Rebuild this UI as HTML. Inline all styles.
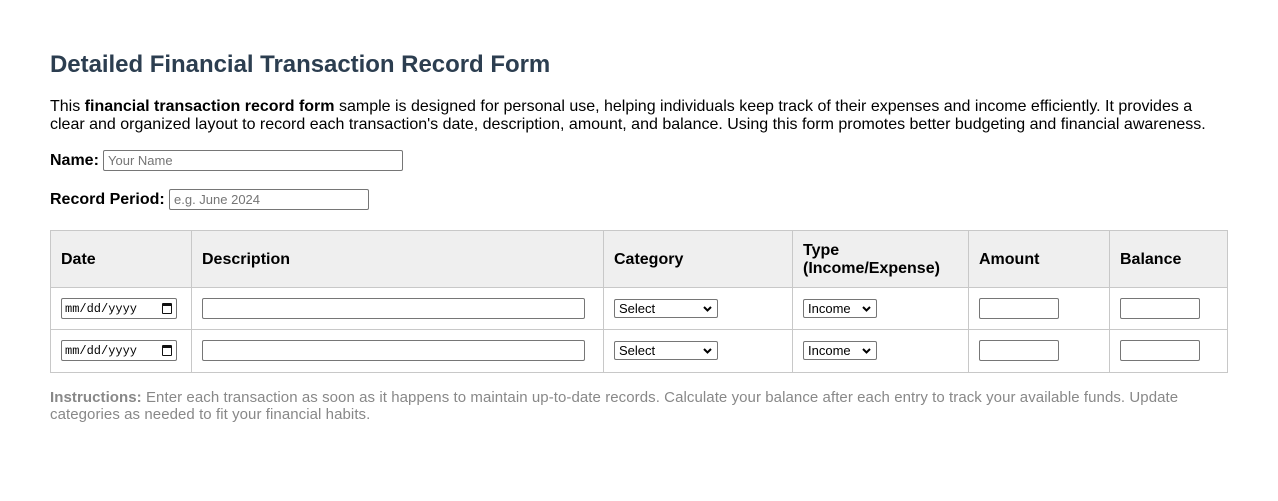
<!DOCTYPE html>
<html><head><style>
*{margin:0;padding:0;box-sizing:border-box}
body{width:1278px;height:501px;background:#fff;font-family:"Liberation Sans",Arial,sans-serif;color:#000;position:relative;overflow:hidden}
.a{position:absolute;white-space:nowrap}
h1{position:absolute;left:50px;top:51px;font-size:24px;color:#2c3e50;font-weight:bold;letter-spacing:-0.03px}
.p{position:absolute;left:50px;top:98px;font-size:16px;line-height:18px;width:1180px}
.lbl{font-size:16px;font-weight:bold}
.in{position:absolute;border:1px solid #767676;border-radius:2px;background:#fff;font-size:13px;color:#757575;padding-left:4px;line-height:19px}
.ln{position:absolute;background:#c8c8c8}
.th{position:absolute;font-size:16px;font-weight:bold;line-height:18px}
.sel{position:absolute;border:1px solid #767676;border-radius:2px;font-size:13px;padding-left:4px;line-height:17px;background:#fff}
.sel svg{position:absolute;right:5px;top:6px}
.date{position:absolute;border:1px solid #767676;border-radius:2px;font-family:"Liberation Mono",monospace;font-size:12px;padding-left:3px;line-height:20px}
.date i{position:absolute;right:4px;top:4px;width:10px;height:11px;border:1.5px solid #111;border-top-width:3px;border-radius:1px}
.ins{position:absolute;left:50px;top:389px;font-size:15px;line-height:17px;color:#888;width:1180px;letter-spacing:0.07px}
</style></head><body>
<h1>Detailed Financial Transaction Record Form</h1>
<div class="p">This <b>financial transaction record form</b> sample is designed for personal use, helping individuals keep track of their expenses and income efficiently. It provides a clear and organized layout to record each transaction's date, description, amount, and balance. Using this form promotes better budgeting and financial awareness.</div>
<div class="a lbl" style="left:50px;top:152px">Name:</div>
<div class="in" style="left:103px;top:150px;width:300px;height:21px">Your Name</div>
<div class="a lbl" style="left:50px;top:191px">Record Period:</div>
<div class="in" style="left:169px;top:189px;width:200px;height:21px">e.g. June 2024</div>

<div style="position:absolute;left:50px;top:230px;width:1178px;height:58px;background:#efefef"></div>
<div class="ln" style="left:50px;top:230px;width:1178px;height:1px"></div>
<div class="ln" style="left:50px;top:287px;width:1178px;height:1px"></div>
<div class="ln" style="left:50px;top:329px;width:1178px;height:1px"></div>
<div class="ln" style="left:50px;top:372px;width:1178px;height:1px"></div>
<div class="ln" style="left:50px;top:230px;width:1px;height:143px"></div>
<div class="ln" style="left:191px;top:230px;width:1px;height:143px"></div>
<div class="ln" style="left:603px;top:230px;width:1px;height:143px"></div>
<div class="ln" style="left:792px;top:230px;width:1px;height:143px"></div>
<div class="ln" style="left:968px;top:230px;width:1px;height:143px"></div>
<div class="ln" style="left:1109px;top:230px;width:1px;height:143px"></div>
<div class="ln" style="left:1227px;top:230px;width:1px;height:143px"></div>

<div class="th" style="left:61px;top:251px">Date</div>
<div class="th" style="left:202px;top:251px">Description</div>
<div class="th" style="left:614px;top:251px">Category</div>
<div class="th" style="left:803px;top:242px">Type<br>(Income/Expense)</div>
<div class="th" style="left:979px;top:251px">Amount</div>
<div class="th" style="left:1120px;top:251px">Balance</div>

<div class="date" style="left:61px;top:298px;width:116px;height:21px">mm/dd/yyyy<i></i></div>
<div class="in" style="left:202px;top:298px;width:383px;height:21px"></div>
<div class="sel" style="left:614px;top:299px;width:104px;height:19px">Select<svg width="9" height="6"><path d="M1 1L4.5 4.5L8 1" stroke="#000" stroke-width="2" fill="none"/></svg></div>
<div class="sel" style="left:803px;top:299px;width:74px;height:19px">Income<svg width="9" height="6"><path d="M1 1L4.5 4.5L8 1" stroke="#000" stroke-width="2" fill="none"/></svg></div>
<div class="in" style="left:979px;top:298px;width:80px;height:21px"></div>
<div class="in" style="left:1120px;top:298px;width:80px;height:21px"></div>

<div class="date" style="left:61px;top:340px;width:116px;height:21px">mm/dd/yyyy<i></i></div>
<div class="in" style="left:202px;top:340px;width:383px;height:21px"></div>
<div class="sel" style="left:614px;top:341px;width:104px;height:19px">Select<svg width="9" height="6"><path d="M1 1L4.5 4.5L8 1" stroke="#000" stroke-width="2" fill="none"/></svg></div>
<div class="sel" style="left:803px;top:341px;width:74px;height:19px">Income<svg width="9" height="6"><path d="M1 1L4.5 4.5L8 1" stroke="#000" stroke-width="2" fill="none"/></svg></div>
<div class="in" style="left:979px;top:340px;width:80px;height:21px"></div>
<div class="in" style="left:1120px;top:340px;width:80px;height:21px"></div>

<div class="ins"><b>Instructions:</b> Enter each transaction as soon as it happens to maintain up-to-date records. Calculate your balance after each entry to track your available funds. Update categories as needed to fit your financial habits.</div>
</body></html>
